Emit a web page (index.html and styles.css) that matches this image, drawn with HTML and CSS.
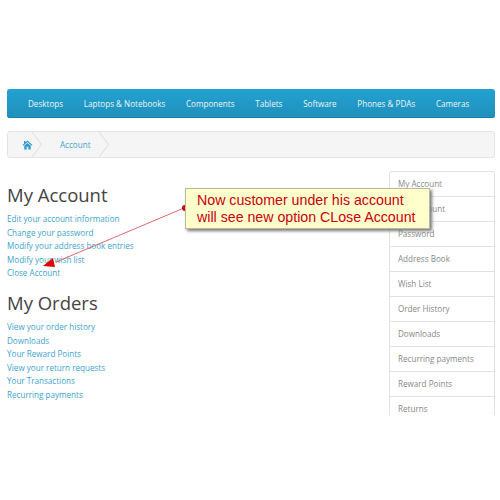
FILE: index.html
```html
<!DOCTYPE html>
<html lang="en">
<head>
    <meta charset="UTF-8">
    <meta name="viewport" content="width=device-width, initial-scale=1.0">
    <title>My Account</title>
    <link rel="stylesheet" href="styles.css">
</head>
<body>
    <div class="page">
        <nav class="menu">
            <a href="#">Desktops</a>
            <a href="#">Laptops &amp; Notebooks</a>
            <a href="#">Components</a>
            <a href="#">Tablets</a>
            <a href="#">Software</a>
            <a href="#">Phones &amp; PDAs</a>
            <a href="#">Cameras</a>
        </nav>

        <div class="breadcrumb">
            <a class="crumb crumb-home" href="#">
                <svg width="11" height="10" viewBox="0 0 22 20"><path d="M11 1 L21 10 L19.5 11.6 L11 4.2 L2.5 11.6 L1 10 L4 7.3 V2 H7 V4.6 Z M4.5 11.4 L11 5.8 L17.5 11.4 V19 H12.8 V13.6 H9.2 V19 H4.5 Z" fill="#2d9ccb"/></svg>
            </a>
            <a class="crumb" href="#">Account</a>
        </div>

        <div class="content">
            <main class="main">
                <h2>My Account</h2>
                <ul class="links">
                    <li><a href="#">Edit your account information</a></li>
                    <li><a href="#">Change your password</a></li>
                    <li><a href="#">Modify your address book entries</a></li>
                    <li><a href="#">Modify your wish list</a></li>
                    <li><a href="#">Close Account</a></li>
                </ul>
                <h2>My Orders</h2>
                <ul class="links">
                    <li><a href="#">View your order history</a></li>
                    <li><a href="#">Downloads</a></li>
                    <li><a href="#">Your Reward Points</a></li>
                    <li><a href="#">View your return requests</a></li>
                    <li><a href="#">Your Transactions</a></li>
                    <li><a href="#">Recurring payments</a></li>
                </ul>
            </main>
            <aside class="sidebar">
                <a href="#">My Account</a>
                <a href="#">Edit Account</a>
                <a href="#">Password</a>
                <a href="#">Address Book</a>
                <a href="#">Wish List</a>
                <a href="#">Order History</a>
                <a href="#">Downloads</a>
                <a href="#">Recurring payments</a>
                <a href="#">Reward Points</a>
                <a href="#">Returns</a>
            </aside>
        </div>
    </div>

    <!-- annotation drawn over the screenshot -->
    <svg class="arrow" width="500" height="500" viewBox="0 0 500 500">
        <line x1="184" y1="208" x2="56" y2="262" stroke="#dc6a6e" stroke-width="1"/>
        <polygon points="53,258 43,266 55,267" fill="#e00000"/>
        <circle cx="185" cy="208" r="3" fill="#d8000c"/>
    </svg>
    <div class="callout">Now customer under his account<br>will see new option CLose Account</div>
</body>
</html>
```

FILE: styles.css
```css
body {
    margin: 0;
    background: #fff;
    font-family: "Open Sans", sans-serif;
    font-size: 8.1px;
    color: #666;
}

a {
    text-decoration: none;
}

.page {
    padding: 89px 5px 0 7px;
}

.menu {
    display: flex;
    height: 29px;
    align-items: center;
    padding-left: 21px;
    gap: 20.7px;
    border-radius: 3px;
    background: linear-gradient(to bottom, #23a1d1, #1f90bb);
    box-shadow: inset 0 -1px 0 #1b7fa6;
}

.menu a {
    color: #fff;
    opacity: 0.92;
    white-space: nowrap;
}

.breadcrumb {
    display: flex;
    height: 25px;
    margin-top: 13px;
    background: #f5f5f5;
    border: 1px solid #e4e4e4;
    border-radius: 3px;
    overflow: hidden;
}

.crumb {
    position: relative;
    display: flex;
    align-items: center;
    padding: 0 12px 0 24px;
    color: #3ea3cc;
}

.crumb-home {
    padding: 0 3px 0 14px;
}

/* chevron divider between crumbs */
.crumb::after {
    content: "";
    position: absolute;
    top: -1px;
    right: -4px;
    width: 18px;
    height: 18px;
    margin-top: 4px;
    border-top: 1px solid #e0e0e0;
    border-right: 1px solid #e0e0e0;
    transform: rotate(45deg) skew(8deg, 8deg);
}

.content {
    display: flex;
    justify-content: space-between;
    margin-top: 13px;
}

.main {
    padding-top: 12px;
}

h2 {
    margin: 0;
    font-size: 18.5px;
    font-weight: 400;
    line-height: 24px;
    color: #444;
}

.links {
    list-style: none;
    margin: 5px 0 11px;
    padding: 0;
}

.links li {
    line-height: 13.6px;
}

.links a {
    color: #3ea3cc;
}

.sidebar {
    display: flex;
    flex-direction: column;
    width: 106px;
    height: 244px;
    overflow: hidden;
    border: 1px solid #e2e2e2;
    border-bottom: 0;
    border-radius: 3px 3px 0 0;
    box-sizing: border-box;
}

.sidebar a {
    flex: none;
    height: 25px;
    line-height: 24px;
    padding-left: 8px;
    box-sizing: border-box;
    color: #888;
    border-bottom: 1px solid #e2e2e2;
}

.arrow {
    position: absolute;
    top: 0;
    left: 0;
    pointer-events: none;
}

.callout {
    position: absolute;
    top: 188px;
    left: 185px;
    width: 245px;
    height: 41px;
    box-sizing: border-box;
    padding: 3px 0 0 11px;
    background: #ffffcc;
    border: 1px solid #b9b9a0;
    box-shadow: 2px 2px 3px #777;
    font-family: "Liberation Sans", Arial, sans-serif;
    font-size: 14.2px;
    line-height: 16.5px;
    color: #c8000f;
}
```
